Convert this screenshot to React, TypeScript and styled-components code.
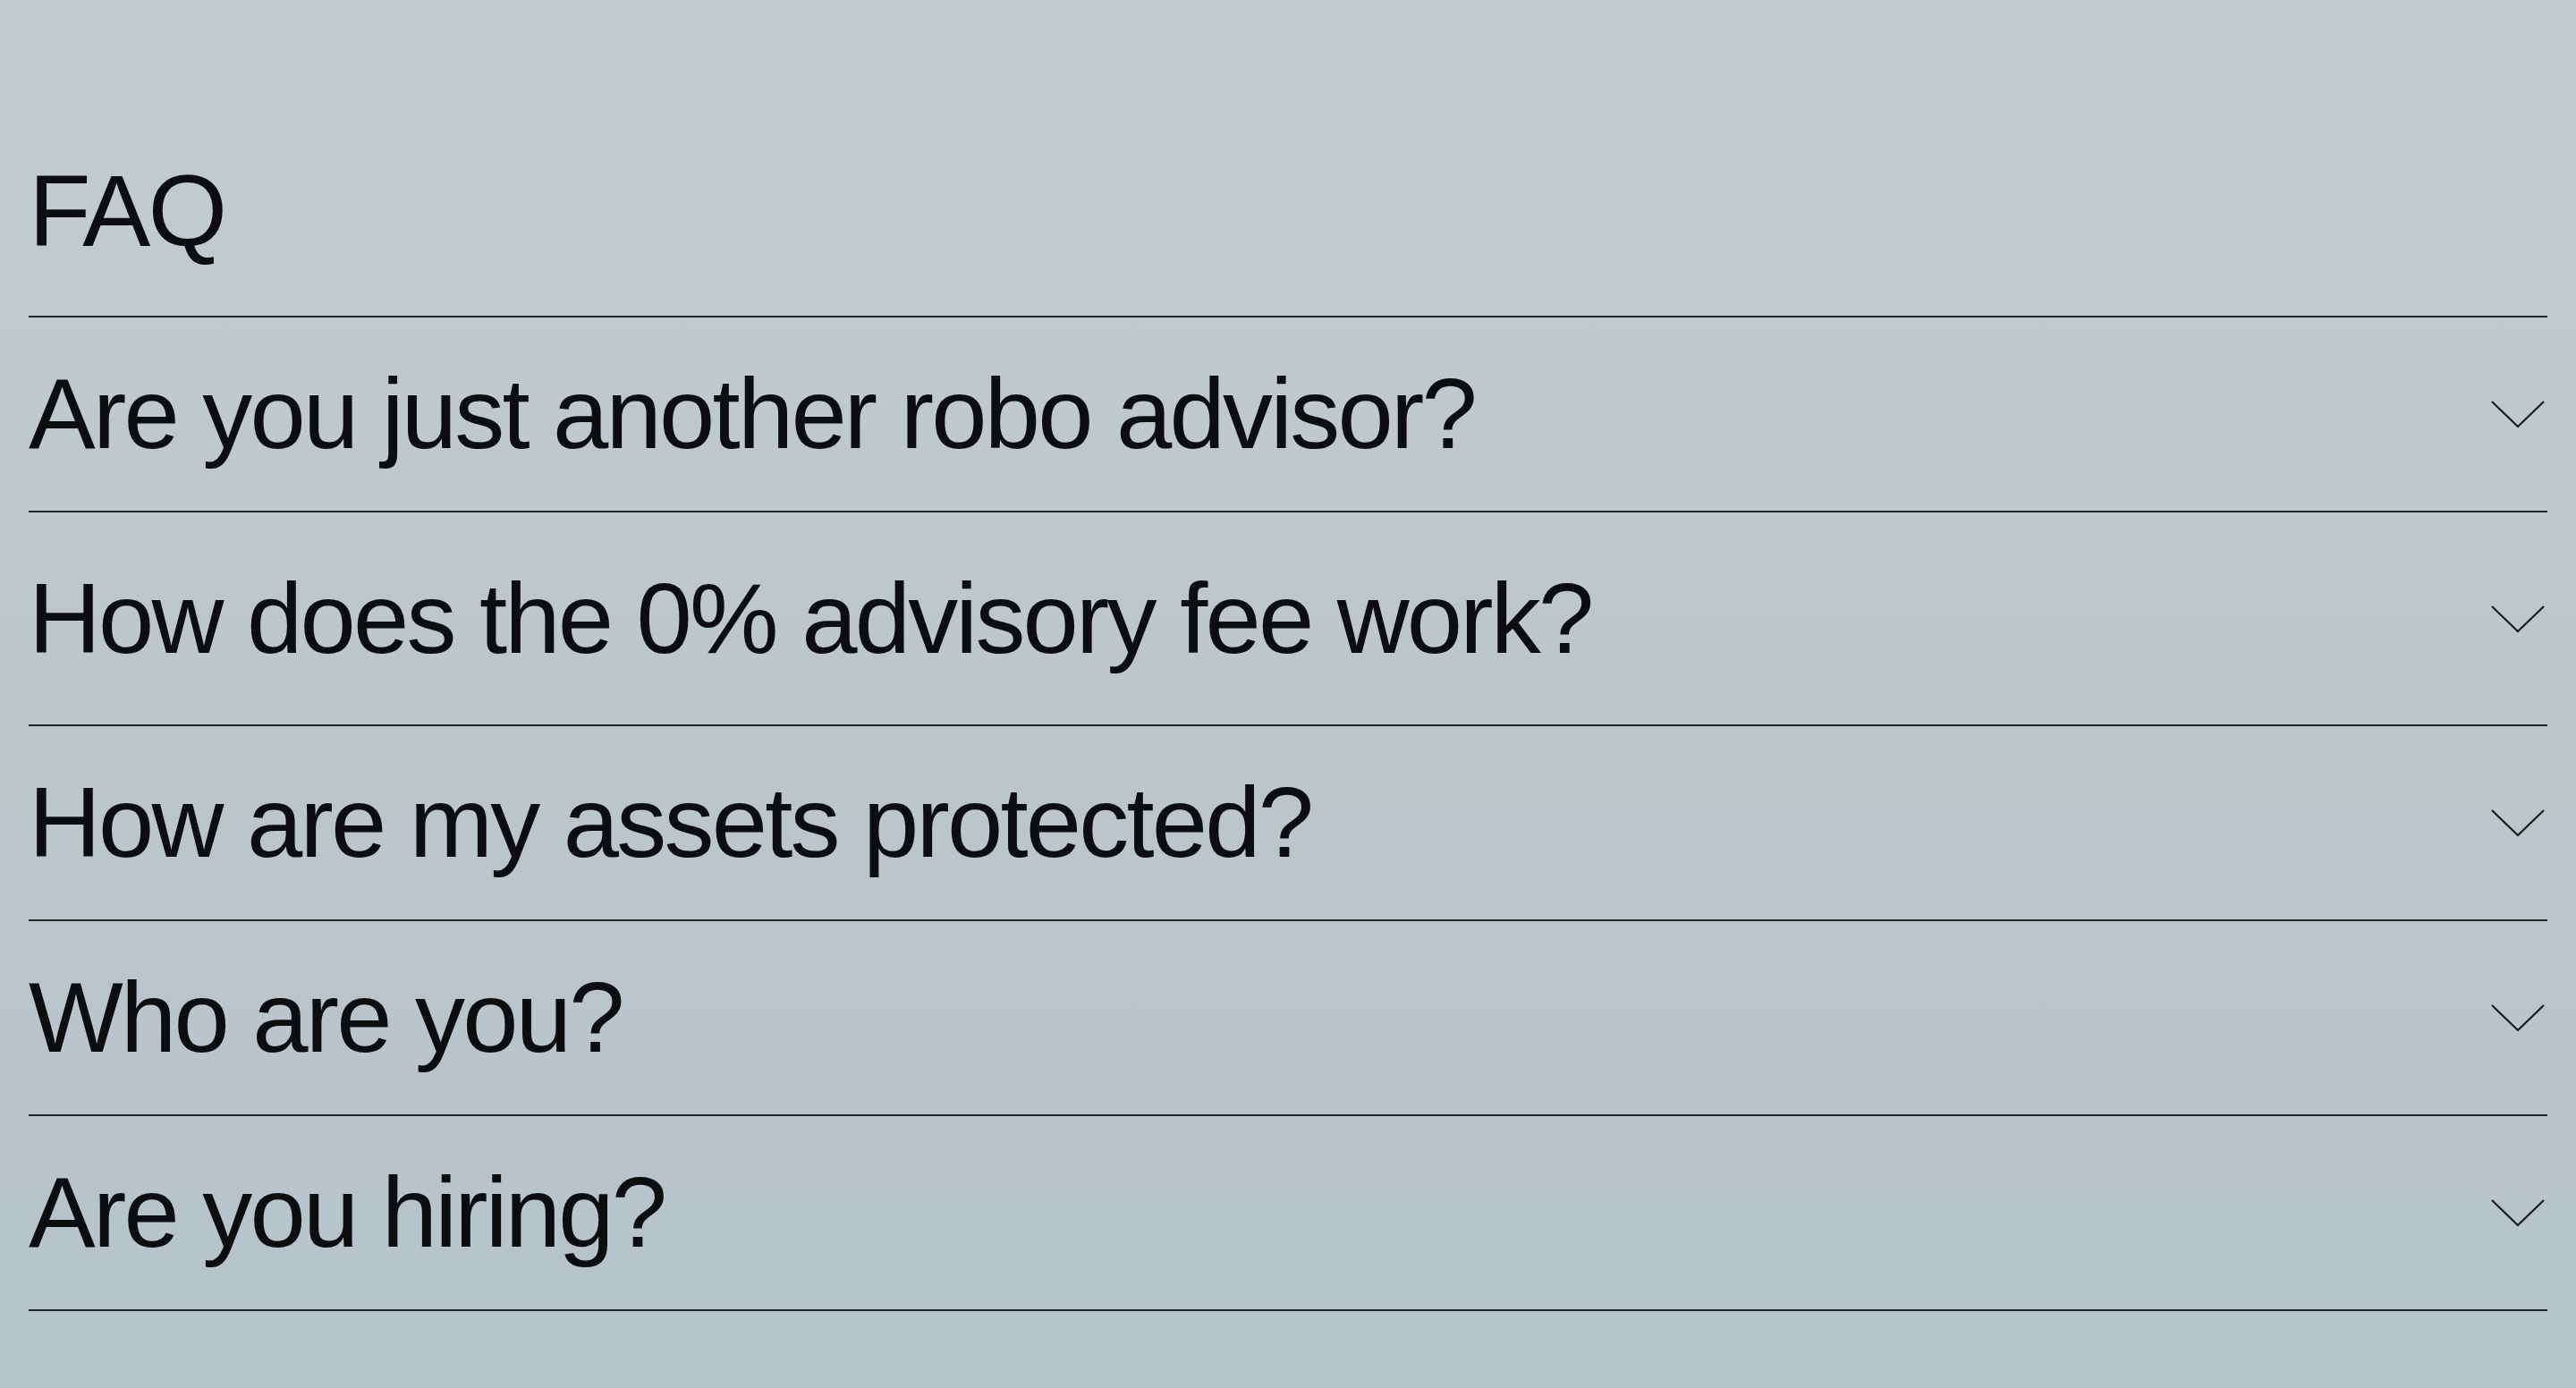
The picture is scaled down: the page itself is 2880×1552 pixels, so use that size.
import styled, { createGlobalStyle } from "styled-components";

type FaqItem = {
    question: string;
    tall?: boolean;
};

const faqs: FaqItem[] = [
    { question: "Are you just another robo advisor?" },
    { question: "How does the 0% advisory fee work?", tall: true },
    { question: "How are my assets protected?" },
    { question: "Who are you?" },
    { question: "Are you hiring?" },
];

function Chevron() {
    return (
        <svg width="62" height="32" viewBox="0 0 62 32" fill="none">
            <path
                d="M2 2 L31 30 L60 2"
                stroke="#161b1e"
                strokeWidth="2.2"
            />
        </svg>
    );
}

function App() {
    return (
        <>
            <GlobalStyle />
            <Page>
                <Title>FAQ</Title>
                <List>
                    {faqs.map((faq) => {
                        return (
                            <Item key={faq.question} $tall={faq.tall}>
                                <Question>{faq.question}</Question>
                                <Toggle>
                                    <Chevron />
                                </Toggle>
                            </Item>
                        );
                    })}
                </List>
            </Page>
        </>
    );
}

export default App;

const GlobalStyle = createGlobalStyle`
    html, body {
        margin: 0;
        padding: 0;
    }
    body {
        font-family: "Liberation Sans", Arial, sans-serif;
        color: #0b0d0e;
    }
`;

const Page = styled.div`
    min-height: 100vh;
    box-sizing: border-box;
    padding: 179px 32px 0;
    background: linear-gradient(180deg, #c3cccd 0%, #bdc7ca 50%, #b6c3cb 100%);
`;

const Title = styled.h1`
    margin: 0 0 60px;
    font-size: 114px;
    font-weight: 400;
    line-height: 1;
    letter-spacing: -3px;
`;

const List = styled.div`
    display: flex;
    flex-direction: column;
    border-top: 2px solid #1e2427;
`;

const Item = styled.div<{ $tall?: boolean }>`
    display: flex;
    align-items: center;
    justify-content: space-between;
    height: ${(props) => (props.$tall ? "237px" : "216px")};
    border-bottom: 2px solid #1e2427;
    cursor: pointer;
`;

const Question = styled.h3`
    margin: 0;
    font-size: 112px;
    font-weight: 400;
    line-height: 1;
    letter-spacing: -2.8px;
`;

const Toggle = styled.div`
    display: flex;
    margin-right: 2px;
`;
